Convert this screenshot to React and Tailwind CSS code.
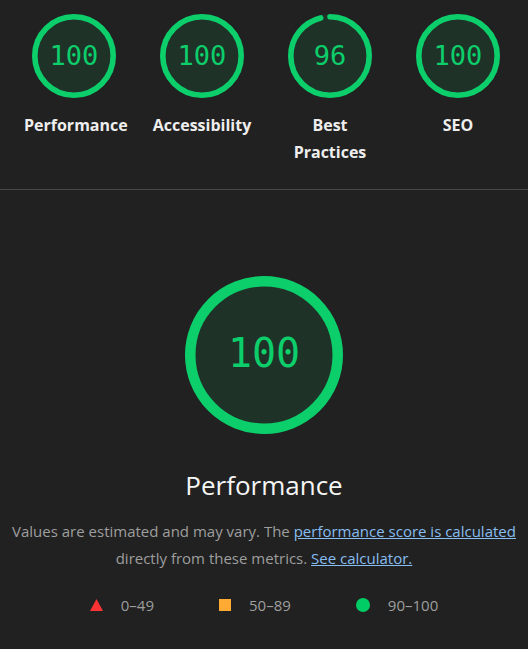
import React from "react";

const sans = { fontFamily: '"Open Sans", "Noto Sans", sans-serif' };
const mono = { fontFamily: '"DejaVu Sans Mono", "Liberation Mono", monospace' };

const C = 2 * Math.PI * 56;

const Gauge = ({ score, size, textCls }) => (
  <div className="relative" style={{ width: size, height: size }}>
    <svg viewBox="0 0 120 120" width={size} height={size}>
      <circle cx="60" cy="60" r="56" fill="#1f3228" stroke="#1f3228" strokeWidth="8" />
      <circle
        cx="60"
        cy="60"
        r="56"
        fill="none"
        stroke="#0cce6b"
        strokeWidth="8"
        strokeLinecap="round"
        strokeDasharray={`${(score / 100) * C} ${C}`}
        transform="rotate(-90 60 60)"
      />
    </svg>
    <div
      className={`absolute inset-0 flex items-center justify-center text-[#0cce6b] ${textCls}`}
      style={mono}
    >
      {score}
    </div>
  </div>
);

const cats = [
  { score: 100, label: "Performance" },
  { score: 100, label: "Accessibility" },
  { score: 96, label: "Best Practices" },
  { score: 100, label: "SEO" },
];

export default function App() {
  return (
    <div className="w-[528px] h-[649px] bg-[#212121] overflow-hidden" style={sans}>
      <div className="flex pl-[10px] pt-[14px] h-[190px] border-b border-[#474747]">
        {cats.map((c) => (
          <div key={c.label} className="w-[128px] flex flex-col items-center">
            <Gauge score={c.score} size={84} textCls="text-[27px]" />
            <div className="mt-[14px] w-[100px] text-center text-[16px] leading-[27px] font-bold text-[#eeeeee]">
              {c.label}
            </div>
          </div>
        ))}
      </div>

      <div className="flex flex-col items-center pt-[86px]">
        <Gauge score={100} size={158} textCls="text-[40px] pb-[4px]" />
        <div className="mt-[34px] text-[26px] leading-[34px] text-[#f5f5f5]">Performance</div>
        <p className="mt-[16px] px-[4px] text-center text-[15px] leading-[27px] text-[#9e9e9e]">
          Values are estimated and may vary. The{" "}
          <a className="text-[#87bdf0] underline">performance score is calculated</a>{" "}
          directly from these metrics.{" "}
          <a className="text-[#87bdf0] underline">See calculator.</a>
        </p>
        <div className="mt-[22px] flex items-center gap-[65px] text-[15px] text-[#9e9e9e]">
          <div className="flex items-center gap-[18px]">
            <svg width="13" height="12" viewBox="0 0 13 12">
              <polygon points="6.5,0 13,12 0,12" fill="#ff3333" />
            </svg>
            <span>0–49</span>
          </div>
          <div className="flex items-center gap-[18px]">
            <span className="w-[12px] h-[12px] bg-[#ffaa33]" />
            <span>50–89</span>
          </div>
          <div className="flex items-center gap-[18px]">
            <span className="w-[14px] h-[14px] rounded-full bg-[#00cc66]" />
            <span>90–100</span>
          </div>
        </div>
      </div>
    </div>
  );
}
